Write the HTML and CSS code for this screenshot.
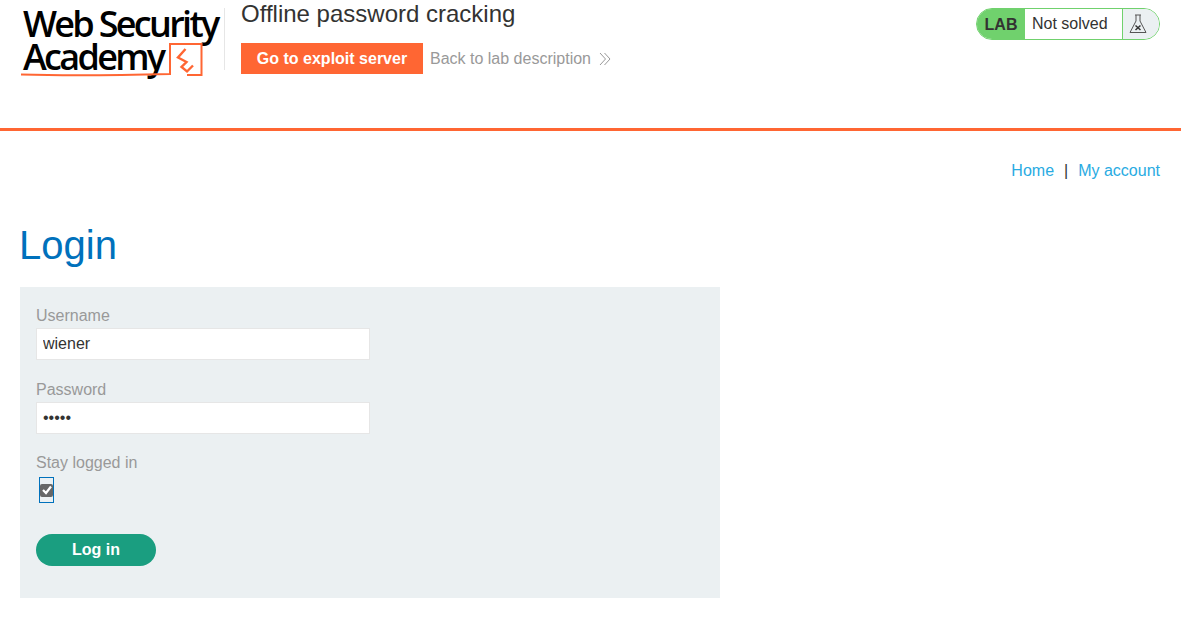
FILE: index.html
```html
<!DOCTYPE html>
<html lang="en">
<head>
    <meta charset="UTF-8">
    <meta name="viewport" content="width=device-width, initial-scale=1.0">
    <title>Offline password cracking</title>
    <link rel="stylesheet" href="styles.css">
</head>
<body>
    <header class="lab-header">
        <div class="logo">
            <div class="logo-text">
                <span class="logo-line">Web Security</span>
                <span class="logo-line">Academy</span>
            </div>
            <svg class="logo-mark" width="200" height="70" viewBox="0 0 200 70" fill="none" stroke="#ff6633" stroke-width="2">
                <path d="M1 66.500 C50 68 110 67 150 66 V36 H181.500 V67 H167"/>
                <path d="M165.500 41 L158 49.500 L166.500 54 L161.500 59 L167 63.500 L173 57.500" stroke-width="2.400"/>
            </svg>
        </div>
        <div class="lab-title">
            <h2>Offline password cracking</h2>
            <div class="lab-links">
                <a class="exploit-button" href="#">Go to exploit server</a>
                <a class="back-link" href="#">
                    Back to lab description
                    <svg width="12" height="14" viewBox="0 0 12 14" fill="none" stroke="#999" stroke-width="1">
                        <path d="M1 1 L6.500 7 L1 13"/>
                        <path d="M5.500 1 L11 7 L5.500 13"/>
                    </svg>
                </a>
            </div>
        </div>
        <div class="lab-status">
            <span class="status-tag">LAB</span>
            <span class="status-text">Not solved</span>
            <span class="status-icon">
                <svg width="18" height="20" viewBox="0 0 18 20" fill="none" stroke="#555" stroke-width="1">
                    <path d="M6 1 H12 M7 1 V7 L1 18.500 H17 L11 7 V1"/>
                    <path d="M6.500 11.500 L11.500 16 M11.500 11.500 L6.500 16" stroke="#333" stroke-width="1.500"/>
                </svg>
            </span>
        </div>
    </header>

    <main class="content">
        <nav class="top-links">
            <a href="#">Home</a>
            <span class="divider">|</span>
            <a href="#">My account</a>
        </nav>
        <h1>Login</h1>
        <form class="login-form">
            <label for="username">Username</label>
            <input type="text" id="username" value="wiener">
            <label for="password">Password</label>
            <input type="password" id="password" value="peter">
            <label for="stay">Stay logged in</label>
            <span class="check-wrap">
                <span class="check-box" id="stay">
                    <svg width="10" height="10" viewBox="0 0 10 10" fill="none" stroke="#fff" stroke-width="2.200">
                        <path d="M1 5 L4 8 L9 1.500"/>
                    </svg>
                </span>
            </span>
            <button type="button">Log in</button>
        </form>
    </main>
</body>
</html>
```

FILE: styles.css
```css
* {
    box-sizing: border-box;
}

body {
    margin: 0;
    font-family: "Liberation Sans", Arial, sans-serif;
    font-size: 16px;
    color: #333332;
    background-color: #fff;
}

a {
    text-decoration: none;
}

/* Lab header */
.lab-header {
    display: flex;
    align-items: flex-start;
    height: 131px;
    padding: 0 21px 0 20px;
    border-bottom: 3px solid #ff6633;
}

.logo {
    position: relative;
    flex: none;
    width: 205px;
    height: 62px;
    margin-top: 8px;
    border-right: 1px solid #e6e6e6;
}

.logo-text {
    display: flex;
    flex-direction: column;
    margin-top: -1px;
    padding-left: 3px;
    color: #000;
    font-family: "Open Sans", sans-serif;
    font-size: 36px;
    font-weight: 550;
    line-height: 33px;
    letter-spacing: -2.700px;
}

.logo-line {
    white-space: nowrap;
}

.logo-mark {
    position: absolute;
    left: 0;
    top: 0;
}

.lab-title {
    flex: 1;
    padding-left: 16px;
}

.lab-title h2 {
    margin: 0;
    font-size: 24px;
    font-weight: normal;
    line-height: 28px;
}

.lab-links {
    display: flex;
    align-items: center;
    margin-top: 15px;
}

.exploit-button {
    width: 182px;
    height: 31px;
    color: #fff;
    background-color: #ff6633;
    font-weight: bold;
    line-height: 31px;
    text-align: center;
}

.back-link {
    display: flex;
    align-items: center;
    gap: 8px;
    margin-left: 7px;
    color: #999;
}

.lab-status {
    display: flex;
    align-items: stretch;
    width: 184px;
    height: 32px;
    margin-top: 8px;
    border: 1px solid #70d16d;
    border-radius: 16px;
    overflow: hidden;
}

.status-tag {
    width: 48px;
    color: #333332;
    background-color: #70d16d;
    font-weight: bold;
    line-height: 31px;
    text-align: center;
}

.status-text {
    flex: 1;
    padding-left: 7px;
    line-height: 30px;
}

.status-icon {
    display: flex;
    align-items: center;
    justify-content: center;
    width: 37px;
    padding-right: 7px;
    border-left: 1px solid #70d16d;
    background-color: #ebf0f2;
}

/* Page content */
.content {
    padding: 0 21px 0 20px;
}

.top-links {
    display: flex;
    justify-content: flex-end;
    gap: 10px;
    margin-top: 31px;
    line-height: 18px;
}

.top-links a {
    color: #29abe2;
}

.content h1 {
    margin: 42px 0 19px -1px;
    color: #0071bc;
    font-size: 40px;
    font-weight: normal;
    line-height: 46px;
}

.login-form {
    display: flex;
    flex-direction: column;
    align-items: flex-start;
    width: 700px;
    height: 311px;
    padding: 20px 16px 0;
    background-color: #ebf0f2;
}

.login-form label {
    color: #999;
    line-height: 18.400px;
}

.login-form input {
    width: 334px;
    height: 32px;
    margin: 3px 0 20.300px;
    padding: 0 6px;
    border: 1px solid #e6e6e6;
    font-family: inherit;
    font-size: 16px;
    color: #333332;
    background-color: #fff;
}

.check-wrap {
    display: flex;
    align-items: center;
    justify-content: center;
    width: 15px;
    height: 26px;
    margin: 4.500px 0 0 3px;
    border: 1px solid #0071bc;
}

.check-box {
    display: flex;
    align-items: center;
    justify-content: center;
    width: 13px;
    height: 13px;
    background-color: #666;
    border-radius: 2px;
}

.login-form button {
    width: 120px;
    height: 32px;
    margin-top: 31px;
    border: none;
    border-radius: 16px;
    color: #fff;
    background-color: #1a9e80;
    font-family: inherit;
    font-size: 16px;
    font-weight: bold;
}
```
